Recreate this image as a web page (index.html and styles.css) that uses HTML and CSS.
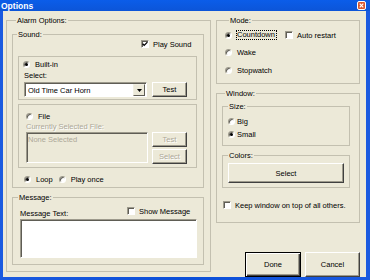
FILE: index.html
```html
<!DOCTYPE html>
<html lang="en">
<head>
    <meta charset="UTF-8">
    <meta name="viewport" content="width=device-width, initial-scale=1.0">
    <title>Options</title>
    <link rel="stylesheet" href="styles.css">
</head>
<body>

    <div class="window">
        <div class="titlebar">
            <span class="title">Options</span>
            <span class="close" aria-label="Close">
                <svg width="9" height="9" viewBox="0 0 9 9">
                    <rect x="0.5" y="0.5" width="8" height="8" rx="1.5" fill="#d9572f" stroke="#fff"/>
                    <path d="M2.7 2.7 L6.3 6.3 M6.3 2.7 L2.7 6.3" stroke="#fff" stroke-width="1.2"/>
                </svg>
            </span>
        </div>

        <div class="client">
            <div class="col-left">
                <fieldset class="group alarm">
                    <legend>Alarm Options:</legend>

                    <fieldset class="group sound">
                        <legend>Sound:</legend>
                        <div class="play-row">
                            <label class="check"><span class="box"><svg width="6" height="6" viewBox="0 0 6 6"><polyline points="0.6,2.7 2.2,4.4 5.4,1.1" fill="none" stroke="#000" stroke-width="1.3"/></svg></span>Play Sound</label>
                        </div>

                        <div class="frame builtin">
                            <label class="opt"><span class="radio on"></span>Built-in</label>
                            <div class="caption">Select:</div>
                            <div class="field-row">
                                <div class="combo">
                                    <span class="combo-text">Old Time Car Horn</span>
                                    <span class="drop"><svg width="5" height="3" viewBox="0 0 5 3"><polygon points="0,0 5,0 2.5,3" fill="#000"/></svg></span>
                                </div>
                                <button class="btn small">Test</button>
                            </div>
                        </div>

                        <div class="frame file">
                            <label class="opt"><span class="radio"></span>File</label>
                            <div class="caption disabled">Currently Selected File:</div>
                            <div class="field-row">
                                <div class="filebox">None Selected</div>
                                <div class="stack">
                                    <button class="btn small" disabled>Test</button>
                                    <button class="btn small" disabled>Select</button>
                                </div>
                            </div>
                        </div>

                        <div class="loop-row">
                            <label class="opt"><span class="radio on"></span>Loop</label>
                            <label class="opt once"><span class="radio"></span>Play once</label>
                        </div>
                    </fieldset>

                    <fieldset class="group message">
                        <legend>Message:</legend>
                        <div class="msg-row">
                            <span class="msg-label">Message Text:</span>
                            <label class="check"><span class="box"></span>Show Message</label>
                        </div>
                        <div class="textarea"></div>
                    </fieldset>
                </fieldset>
            </div>

            <div class="col-right">
                <fieldset class="group mode">
                    <legend>Mode:</legend>
                    <div class="mode-list">
                        <div class="mode-row">
                            <label class="opt"><span class="radio on"></span><span class="focus">Countdown</span></label>
                            <label class="check auto"><span class="box"></span>Auto restart</label>
                        </div>
                        <label class="opt"><span class="radio"></span>Wake</label>
                        <label class="opt"><span class="radio"></span>Stopwatch</label>
                    </div>
                </fieldset>

                <fieldset class="group win">
                    <legend>Window:</legend>
                    <fieldset class="group size">
                        <legend>Size:</legend>
                        <label class="opt big"><span class="radio"></span>Big</label>
                        <label class="opt sml"><span class="radio on"></span>Small</label>
                    </fieldset>
                    <fieldset class="group colors">
                        <legend>Colors:</legend>
                        <button class="btn wide">Select</button>
                    </fieldset>
                    <label class="check keep"><span class="box"></span>Keep window on top of all others.</label>
                </fieldset>

                <div class="actions">
                    <button class="btn action default">Done</button>
                    <button class="btn action">Cancel</button>
                </div>
            </div>
        </div>
    </div>

</body>
</html>
```

FILE: styles.css
```css
body {
    margin: 0;
    font-family: "Liberation Sans", Arial, sans-serif;
    font-size: 7.5px;
    line-height: 9px;
    color: #000;
    background-color: #0b50dd;
}
.window {
    width: 370px;
    height: 280px;
    background: linear-gradient(to right, #1a5ae0, #0b4fd8 50%, #1a5ae0);
}
.titlebar {
    height: 11px;
    display: flex;
    align-items: center;
    justify-content: space-between;
    padding: 0 4px 0 1px;
    background: linear-gradient(#0b5de9, #0c55d8);
}
.title {
    color: #fff;
    font-weight: bold;
    font-size: 8.5px;
    line-height: 10px;
}
.close {
    display: flex;
}
.client {
    margin: 0 4px 0 3px;
    height: 266px;
    box-sizing: border-box;
    padding: 5px 0 0 3px;
    display: flex;
    gap: 5px;
    background-color: #ece9d8;
}
.col-left {
    width: 205px;
}
.col-right {
    width: 144px;
    display: flex;
    flex-direction: column;
}

/* group boxes */
.group {
    margin: 0;
    padding: 0;
    min-width: 0;
    box-sizing: border-box;
    border: 1px solid #c3c0b0;
}
.group legend {
    padding: 0 1px;
    margin-left: 4px;
    line-height: 9px;
}
.alarm {
    height: 256px;
    padding: 0 6px 0 5px;
}
.sound {
    margin-top: 5px;
    height: 158px;
}
.message {
    margin-top: 5px;
    height: 72px;
}
.message legend {
    margin-left: 5px;
}
.mode {
    height: 68px;
    padding-left: 8px;
}
.win {
    margin-top: 5px;
    height: 134px;
    padding: 0 9px 0 5px;
}
.win legend {
    margin-left: 3px;
}
.size {
    margin-top: 4px;
    height: 44px;
    padding-left: 5px;
}
.colors {
    margin-top: 5px;
    height: 37px;
    padding-left: 5px;
}
.size legend,
.colors legend {
    margin-left: 0;
}

/* plain frames */
.frame {
    margin-left: 5px;
    width: 179px;
    box-sizing: border-box;
    border: 1px solid #c3c0b0;
}
.builtin {
    margin-top: 7px;
    height: 44px;
    padding: 2px 0 0 4px;
}
.file {
    margin-top: 4px;
    height: 64px;
    padding: 6px 0 0 7px;
}

/* radios and checks */
.opt,
.check {
    display: flex;
    align-items: center;
    height: 10px;
    gap: 5px;
    white-space: nowrap;
}
.check {
    gap: 4px;
}
.radio {
    width: 7px;
    height: 7px;
    box-sizing: border-box;
    border-radius: 50%;
    background: #fff;
    border: 1px solid;
    border-color: #9d9a8c #fff #fff #9d9a8c;
    box-shadow: inset 1px 1px 0 #5f5d55;
    display: flex;
    align-items: center;
    justify-content: center;
}
.radio.on::after {
    content: "";
    width: 3px;
    height: 3px;
    border-radius: 50%;
    background: #000;
}
.box {
    width: 8px;
    height: 8px;
    box-sizing: border-box;
    background: #fff;
    border: 1px solid;
    border-color: #9d9a8c #fff #fff #9d9a8c;
    box-shadow: inset 1px 1px 0 #5f5d55;
    display: flex;
    align-items: center;
    justify-content: center;
}
.play-row {
    height: 10px;
    padding-left: 128px;
}
.caption {
    margin-top: 2px;
    padding-left: 1px;
}
.file .caption {
    margin-top: 1px;
    padding-left: 0;
}
.disabled {
    color: #aca899;
    text-shadow: 1px 1px 0 #fff;
}
.field-row {
    margin-top: 2px;
    display: flex;
    gap: 5px;
}
.file .field-row {
    margin-top: 1px;
    gap: 4px;
}

/* fields */
.combo {
    margin-left: 1px;
    width: 123px;
    height: 15px;
    box-sizing: border-box;
    background: #fff;
    border: 1px solid;
    border-color: #9d9a8c #fff #fff #9d9a8c;
    box-shadow: inset 1px 1px 0 #5f5d55;
    display: flex;
    align-items: center;
    justify-content: space-between;
    padding: 1px 1px 0 3px;
}
.drop {
    width: 12px;
    height: 12px;
    box-sizing: border-box;
    background: #ece9d8;
    border: 1px solid;
    border-color: #f1efe2 #5f5d55 #5f5d55 #f1efe2;
    display: flex;
    align-items: center;
    justify-content: center;
}
.filebox {
    width: 122px;
    height: 31px;
    box-sizing: border-box;
    border: 1px solid;
    border-color: #9d9a8c #fff #fff #9d9a8c;
    box-shadow: inset 1px 1px 0 #5f5d55;
    padding: 2px 0 0 1px;
    color: #aca899;
}
.stack {
    display: flex;
    flex-direction: column;
    gap: 2px;
}
.textarea {
    margin: 1px 0 0 7px;
    width: 177px;
    height: 39px;
    box-sizing: border-box;
    background: #fff;
    border: 1px solid;
    border-color: #9d9a8c #fff #fff #9d9a8c;
    box-shadow: inset 1px 1px 0 #5f5d55;
}

/* buttons */
.btn {
    font-family: inherit;
    font-size: 7.5px;
    line-height: 9px;
    color: #000;
    padding: 0;
    margin: 0;
    box-sizing: border-box;
    background: #ece9d8;
    border: 1px solid;
    border-color: #fff #404040 #404040 #fff;
    box-shadow: inset -1px -1px 0 #9d9a8c;
}
.btn:disabled {
    color: #aca899;
    text-shadow: 1px 1px 0 #fff;
}
.small {
    width: 35px;
    height: 15px;
}
.wide {
    margin-top: 3px;
    width: 116px;
    height: 20px;
}
.action {
    width: 55px;
    height: 25px;
}
.action.default {
    width: 56px;
    border-color: #000;
    box-shadow: inset 1px 1px 0 #fff, inset -1px -1px 0 #404040, inset -2px -2px 0 #9d9a8c;
}
.actions {
    margin-top: auto;
    display: flex;
    justify-content: flex-end;
    gap: 4px;
}

/* rows */
.loop-row {
    margin-top: 6px;
    height: 10px;
    padding-left: 11px;
    display: flex;
}
.once {
    margin-left: 6px;
}
.msg-row {
    margin-top: 4px;
    height: 12px;
    padding-left: 7px;
    display: flex;
}
.msg-label {
    width: 107px;
    margin-top: 3px;
}
.mode-list {
    margin-top: 5px;
    display: flex;
    flex-direction: column;
    gap: 7.5px;
}
.mode-row {
    display: flex;
    align-items: center;
}
.mode-row .opt {
    gap: 4px;
}
.focus {
    border: 1px dotted #000;
    padding: 0 1px 0 0;
    line-height: 8px;
}
.auto {
    margin-left: 8px;
}
.big {
    margin-top: 5px;
    gap: 2px;
}
.sml {
    margin-top: 3px;
    gap: 2px;
}
.keep {
    margin: 12px 0 0 1px;
}
```
